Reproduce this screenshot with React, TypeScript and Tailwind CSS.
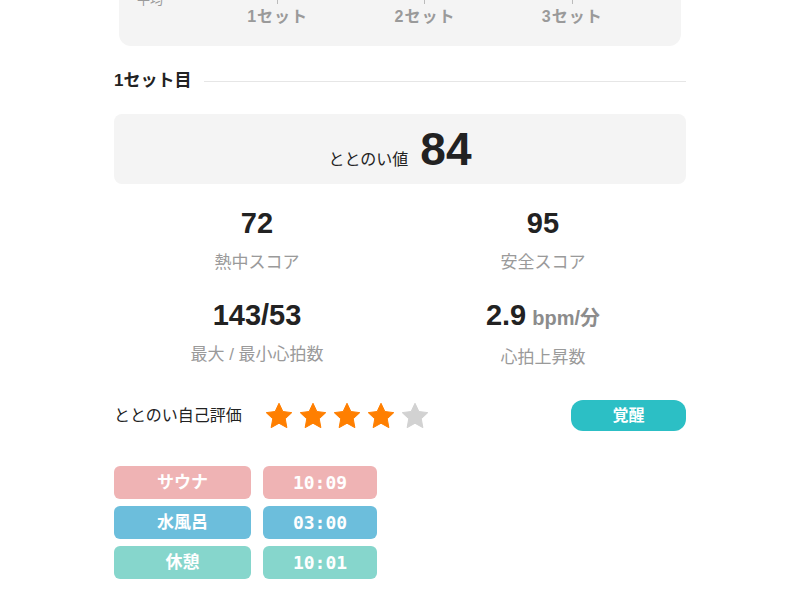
const sets = ["1セット", "2セット", "3セット"];

const stats = [
  { value: "72", unit: "", label: "熱中スコア" },
  { value: "95", unit: "", label: "安全スコア" },
  { value: "143/53", unit: "", label: "最大 / 最小心拍数" },
  { value: "2.9", unit: "bpm/分", label: "心拍上昇数" },
];

const phases = [
  { name: "サウナ", time: "10:09", color: "bg-[#efb3b4]" },
  { name: "水風呂", time: "03:00", color: "bg-[#6cbedc]" },
  { name: "休憩", time: "10:01", color: "bg-[#86d6cc]" },
];

function StarIcon({ filled }: { filled: boolean }) {
  return (
    <svg viewBox="0 0 24 24" className="h-[30px] w-[30px]">
      <path
        d="M12 1.8l3.1 6.6 7.1.9-5.2 4.9 1.3 7.1L12 17.8l-6.3 3.5 1.3-7.1-5.2-4.9 7.1-.9z"
        fill={filled ? "#ff7f00" : "#d2d2d2"}
        stroke={filled ? "#ff7f00" : "#d2d2d2"}
        strokeWidth={0.8}
        strokeLinejoin="round"
      />
    </svg>
  );
}

export default function App() {
  return (
    <div
      className="w-[800px] h-[600px] overflow-hidden bg-white"
      style={{ fontFamily: '"Liberation Sans", "Noto Sans CJK JP", sans-serif' }}
    >
      <div className="mx-auto w-[572px]">
        {/* Set chart card (scrolled off the top) */}
        <div className="mx-[5px] -mt-[24px] flex rounded-[12px] bg-[#f4f4f4] pb-[19px] pr-[35px]">
          <div className="w-[85px]">
            <div className="h-[31px] pl-[18px] pt-[14px] text-[13px] leading-[20px] text-[#9a9a9a]">
              平均
            </div>
          </div>
          <div className="grid flex-1 grid-cols-3">
            {sets.map((s) => (
              <div key={s} className="flex flex-col items-center">
                <div className="flex h-[31px] items-end pb-[3px]">
                  <div className="h-[4px] w-px bg-[#bbbbbb]" />
                </div>
                <p className="text-[16px] font-bold leading-[20px] tracking-[1px] text-[#9a9a9a]">
                  {s}
                </p>
              </div>
            ))}
          </div>
        </div>

        {/* Section heading */}
        <div className="mt-[25px] flex items-center gap-[13px]">
          <p className="text-[17px] font-bold leading-[20px] text-[#222]">1セット目</p>
          <div className="h-px flex-1 bg-[#e6e6e6]" />
        </div>

        {/* Totonoi value */}
        <div className="mt-[23px] flex h-[70px] items-baseline justify-center gap-[12px] rounded-[8px] bg-[#f4f4f4] pt-[9px]">
          <span className="text-[16px] text-[#222]">ととのい値</span>
          <span className="text-[46px] font-bold leading-[52px] text-[#222]">84</span>
        </div>

        {/* Stats */}
        <div className="mt-[23px] grid grid-cols-2 gap-y-[25px]">
          {stats.map((st) => (
            <div key={st.label} className="flex flex-col items-center gap-[13px]">
              <p className="flex items-baseline gap-[6px] leading-[32px]">
                <span className="text-[29px] font-semibold text-[#222]">{st.value}</span>
                {st.unit && (
                  <span className="text-[20px] font-semibold text-[#8c8c8c]">{st.unit}</span>
                )}
              </p>
              <p className="text-[17px] leading-[22px] text-[#9a9a9a]">{st.label}</p>
            </div>
          ))}
        </div>

        {/* Self rating */}
        <div className="mt-[31px] flex h-[31px] items-center">
          <p className="w-[150px] text-[16px] text-[#222]">ととのい自己評価</p>
          <div className="flex gap-[4px]">
            {[0, 1, 2, 3, 4].map((i) => (
              <StarIcon key={i} filled={i < 4} />
            ))}
          </div>
          <div className="ml-auto flex h-[31px] w-[115px] items-center justify-center rounded-[12px] bg-[#2cbfc5] text-[16px] font-bold text-white">
            覚醒
          </div>
        </div>

        {/* Phase times */}
        <div className="mt-[35px] flex flex-col gap-[7px]">
          {phases.map((p) => (
            <div key={p.name} className="flex gap-[12px]">
              <div
                className={`flex h-[33px] w-[137px] items-center justify-center rounded-[6px] text-[17px] font-bold text-white ${p.color}`}
              >
                {p.name}
              </div>
              <div
                className={`flex h-[33px] w-[114px] items-center justify-center rounded-[6px] text-[18px] font-bold text-white ${p.color}`}
                style={{ fontFamily: '"DejaVu Sans Mono", monospace' }}
              >
                {p.time}
              </div>
            </div>
          ))}
        </div>
      </div>
    </div>
  );
}
